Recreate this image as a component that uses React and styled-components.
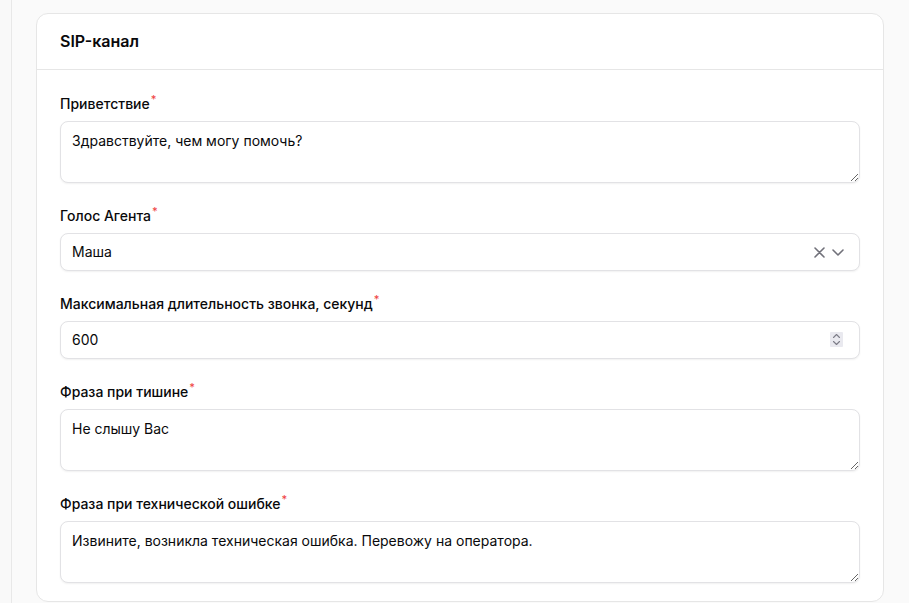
import React from "react";
import styled, { createGlobalStyle } from "styled-components";

const Global = createGlobalStyle`
  html, body { margin: 0; padding: 0; }
  body {
    background: #fafafa;
    font-family: Inter, "Noto Sans", "Liberation Sans", sans-serif;
    color: #09090b;
    -webkit-font-smoothing: antialiased;
  }
  * { box-sizing: border-box; }
`;

const Page = styled.div`
  display: flex;
  height: 603px;
  overflow: hidden;
`;

const SideEdge = styled.div`
  width: 12px;
  flex: none;
  background: #f9f9f9;
  border-right: 1px solid #e8e8e8;
`;

const Main = styled.main`
  flex: 1;
  padding: 13px 25px 0 24px;
`;

const Card = styled.section`
  background: #fff;
  border: 1px solid #e6e6e6;
  border-radius: 12px;
`;

const CardHeader = styled.header`
  height: 56px;
  display: flex;
  align-items: center;
  padding: 0 23px 1px;
  border-bottom: 1px solid #e6e6e6;
`;

const Title = styled.h2`
  margin: 0;
  font-size: 16px;
  font-weight: 600;
  line-height: 24px;
  color: #09090b;
`;

const CardBody = styled.div`
  padding: 24px 23px 18px;
  display: flex;
  flex-direction: column;
  gap: 23px;
`;

const Field = styled.div`
  display: flex;
  flex-direction: column;
  gap: 7px;
`;

const Label = styled.label`
  display: block;
  font-size: 14px;
  font-weight: 500;
  line-height: 20px;
  color: #09090b;
`;

const Req = styled.span`
  color: #ef4444;
  font-size: 11px;
  line-height: 0;
  position: relative;
  top: -6px;
  margin-left: 1px;
`;

const controlBase = `
  width: 100%;
  border: 1px solid #e2e2e5;
  border-radius: 8px;
  background: #fff;
  box-shadow: 0 1px 2px rgba(0, 0, 0, 0.06);
  font-family: Inter, "Noto Sans", "Liberation Sans", sans-serif;
  font-size: 14px;
  line-height: 20px;
  color: #09090b;
  outline: none;
`;

const TextArea = styled.textarea`
  ${controlBase}
  display: block;
  height: 62px;
  padding: 9px 12px 11px 11px;
  resize: vertical;
`;

const Control = styled.div`
  ${controlBase}
  height: 38px;
  display: flex;
  align-items: center;
  padding: 0 12px 0 11px;
`;

const Value = styled.span`
  flex: 1;
`;

const Indicators = styled.div`
  display: flex;
  align-items: center;
  gap: 7px;
  margin-right: 3px;
  color: #71717a;
`;

const NumberInput = styled.input`
  flex: 1;
  border: none;
  outline: none;
  padding: 0;
  background: transparent;
  font: inherit;
  color: inherit;
  -moz-appearance: textfield;
  &::-webkit-inner-spin-button,
  &::-webkit-outer-spin-button {
    -webkit-appearance: none;
    margin: 0;
  }
`;

const Spinner = styled.div`
  width: 13px;
  height: 15px;
  background: #e9e9ef;
  border-radius: 1px;
  display: flex;
  align-items: center;
  justify-content: center;
  margin: 0 4px 1px 0;
  color: #7d7d88;
`;

const ClearIcon = () => (
  <svg width="11" height="11" viewBox="0 0 11 11" fill="none">
    <path d="M1 1L10 10M10 1L1 10" stroke="currentColor" strokeWidth="1.6" strokeLinecap="round" />
  </svg>
);

const ChevronIcon = () => (
  <svg width="12" height="7" viewBox="0 0 12 7" fill="none">
    <path d="M1 1L6 6L11 1" stroke="currentColor" strokeWidth="1.6" strokeLinecap="round" strokeLinejoin="round" />
  </svg>
);

const SpinIcon = () => (
  <svg width="9" height="13" viewBox="0 0 9 13" fill="none">
    <path d="M1.5 4.5L4.5 1.5L7.5 4.5M1.5 8.5L4.5 11.5L7.5 8.5" stroke="currentColor" strokeWidth="1.1" strokeLinecap="round" strokeLinejoin="round" />
  </svg>
);

const FormLabel = ({ children }) => (
  <Label>
    {children}
    <Req>*</Req>
  </Label>
);

export default function App() {
  return (
    <>
      <Global />
      <Page>
        <SideEdge />
        <Main>
          <Card>
            <CardHeader>
              <Title>SIP-канал</Title>
            </CardHeader>
            <CardBody>
              <Field>
                <FormLabel>Приветствие</FormLabel>
                <TextArea defaultValue="Здравствуйте, чем могу помочь?" />
              </Field>
              <Field>
                <FormLabel>Голос Агента</FormLabel>
                <Control>
                  <Value>Маша</Value>
                  <Indicators>
                    <ClearIcon />
                    <ChevronIcon />
                  </Indicators>
                </Control>
              </Field>
              <Field>
                <FormLabel>Максимальная длительность звонка, секунд</FormLabel>
                <Control>
                  <NumberInput type="number" defaultValue={600} />
                  <Spinner>
                    <SpinIcon />
                  </Spinner>
                </Control>
              </Field>
              <Field>
                <FormLabel>Фраза при тишине</FormLabel>
                <TextArea defaultValue="Не слышу Вас" />
              </Field>
              <Field>
                <FormLabel>Фраза при технической ошибке</FormLabel>
                <TextArea defaultValue="Извините, возникла техническая ошибка. Перевожу на оператора." />
              </Field>
            </CardBody>
          </Card>
        </Main>
      </Page>
    </>
  );
}
